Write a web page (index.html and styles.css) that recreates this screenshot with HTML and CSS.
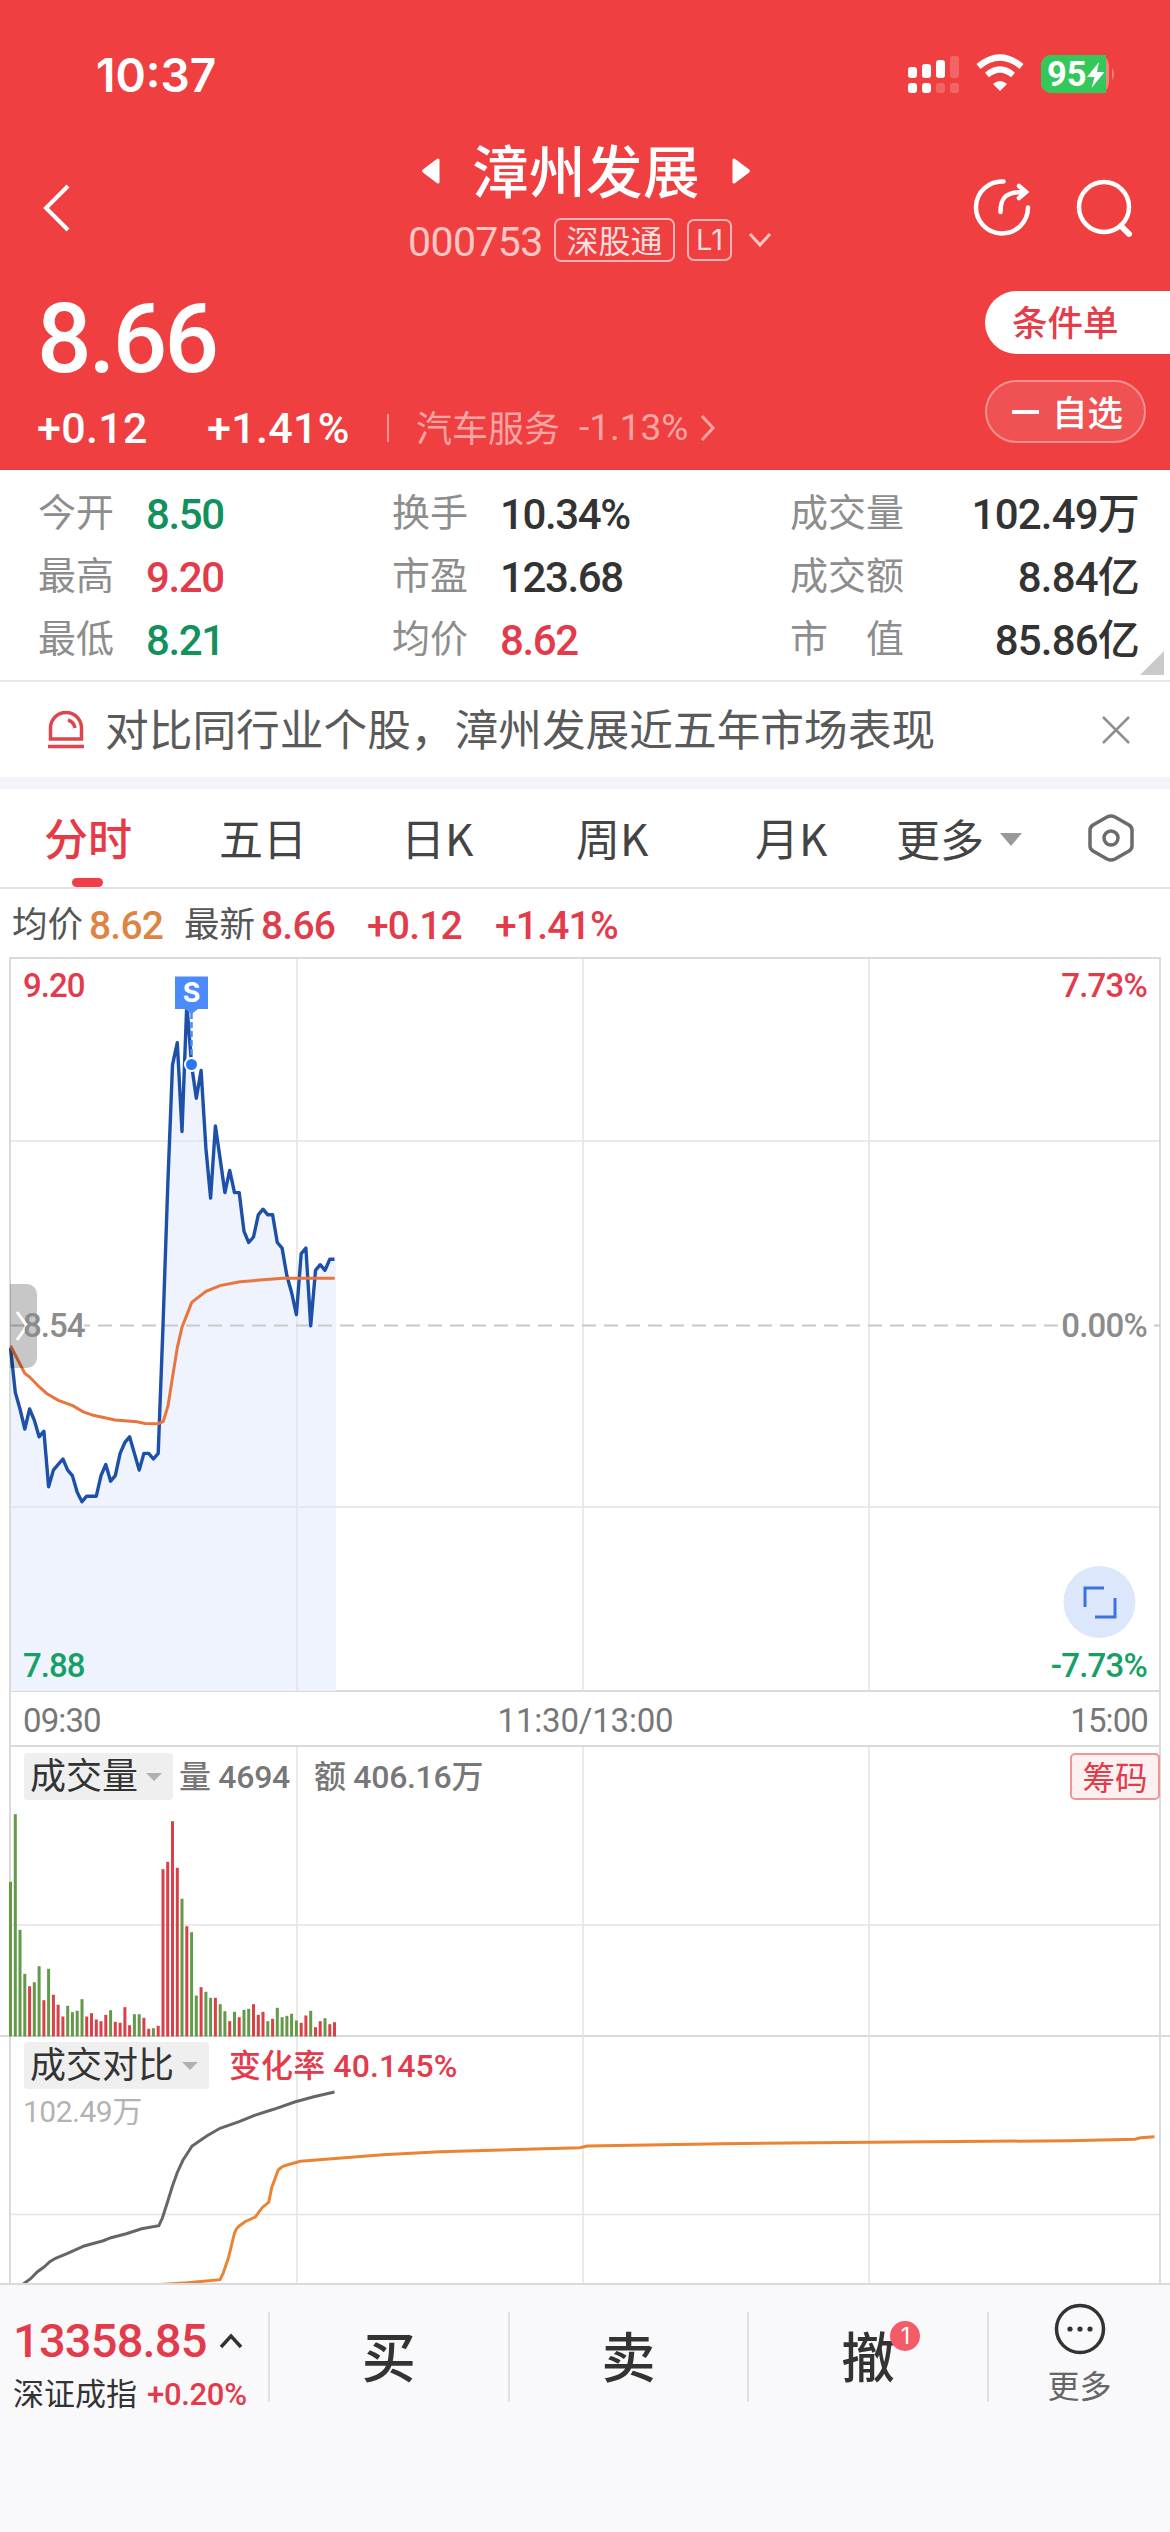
FILE: index.html
```html
<!DOCTYPE html>
<html lang="zh-CN">
<head>
    <meta charset="UTF-8">
    <title>漳州发展 000753</title>
    <link rel="stylesheet" href="styles.css">
</head>
<body>
    <div class="header">
        <div class="status-bar">
            <span class="time">10:37</span>
            <svg class="status-icons" width="210" height="40" viewBox="0 0 210 40">
                <g fill="#fff">
                    <rect x="2" y="13" width="9" height="11" rx="3"/>
                    <rect x="16" y="10" width="9" height="14" rx="3"/>
                    <rect x="30" y="6" width="9" height="18" rx="3"/>
                    <rect x="44" y="2" width="9" height="22" rx="3" opacity=".2"/>
                    <rect x="2" y="29" width="9" height="10" rx="3"/>
                    <rect x="16" y="29" width="9" height="10" rx="3"/>
                    <rect x="30" y="29" width="9" height="10" rx="3" opacity=".2"/>
                    <rect x="44" y="29" width="9" height="10" rx="3" opacity=".2"/>
                    <path d="M94 37l-7-7q7-6 14 0z"/>
                </g>
                <path d="M72.500 12.500q21.500-18 43 0M81 21q13-11 26 0" fill="none" stroke="#fff" stroke-width="6.200"/>
                <rect x="135" y="1" width="68" height="38" rx="10" fill="#f48281"/>
                <path d="M145 1h55v38h-55a10 10 0 0 1-10-10v-18a10 10 0 0 1 10-10z" fill="#34c759"/>
                <path d="M206 14q4 6 0 12z" fill="#f48281"/>
                <path d="M193 8l-12 15h7.500l-3 11 13-16h-7.500z" fill="#fff"/>
                <text class="battery" x="141" y="32">95</text>
            </svg>
        </div>

        <div class="title-bar">
            <svg class="back" width="34" height="52" viewBox="0 0 34 52"><path d="M28 4L6 26l22 22"/></svg>
            <div class="title-box">
                <div class="name-row">
                    <svg width="20" height="28" viewBox="0 0 20 28"><path d="M2.500 14L17 3v22z"/></svg>
                    <h1>漳州发展</h1>
                    <svg width="20" height="28" viewBox="0 0 20 28"><path d="M17.500 14L3 3v22z"/></svg>
                </div>
                <div class="code-row">
                    <span class="code">000753</span>
                    <span class="tag">深股通</span>
                    <span class="tag tag-l1">L1</span>
                    <svg width="26" height="18" viewBox="0 0 26 18"><path d="M3 3l10 11L23 3"/></svg>
                </div>
            </div>
            <svg class="tools" width="170" height="64" viewBox="0 0 170 64">
                <path d="M38.500 5.500a26 26 0 1 0 24.500 26M35.500 36c0-14 5-20 22-20M54 10l7 6-7 6"/>
                <circle cx="139" cy="31" r="25"/>
                <path d="M156 50l8 8" stroke-width="6"/>
            </svg>
        </div>

        <div class="price-box">
            <div class="price">8.66</div>
            <div class="change-row">
                <span class="change">+0.12</span>
                <span class="percent">+1.41%</span>
                <i class="divider"></i>
                <span class="industry">汽车服务</span>
                <span class="industry-rate">-1.13%</span>
                <svg width="18" height="30" viewBox="0 0 18 30"><path d="M3 3l11 12L3 27"/></svg>
            </div>
            <div class="actions">
                <div class="btn-order">条件单</div>
                <div class="btn-fav"><i></i>自选</div>
            </div>
        </div>
    </div>

    <div class="stats">
        <span>今开</span><b class="green">8.50</b><span>换手</span><b>10.34%</b><span>成交量</span><b class="right">102.49万</b>
        <span>最高</span><b class="red">9.20</b><span>市盈</span><b>123.68</b><span>成交额</span><b class="right">8.84亿</b>
        <span>最低</span><b class="green">8.21</b><span>均价</span><b class="red">8.62</b><span>市　值</span><b class="right">85.86亿</b>
        <i class="corner"></i>
    </div>

    <div class="notice">
        <svg width="40" height="40" viewBox="0 0 40 40"><path d="M4.500 29V18a15.500 15.500 0 0 1 31 0v11zM2 36.500h36M22 10q6 2 7 8"/></svg>
        <p>对比同行业个股，漳州发展近五年市场表现</p>
        <svg class="close" width="30" height="30" viewBox="0 0 30 30"><path d="M2 2l26 26M28 2L2 28"/></svg>
    </div>

    <div class="tabs">
        <span class="tab active">分时</span>
        <span class="tab">五日</span>
        <span class="tab">日K</span>
        <span class="tab">周K</span>
        <span class="tab">月K</span>
        <span class="tab more">更多<i class="arrow"></i></span>
        <svg class="setting" width="48" height="50" viewBox="0 0 48 50">
            <path d="M24 3q2 0 4 1l14 8q3 2 3 5v16q0 3-3 5l-14 8q-4 2-8 0l-14-8q-3-2-3-5V17q0-3 3-5l14-8q2-1 4-1z"/>
            <circle cx="24" cy="25" r="7"/>
        </svg>
    </div>

    <div class="legend">
        <span>均价</span><b class="orange">8.62</b>
        <span>最新</span><b class="red">8.66</b>
        <b class="red lg-change">+0.12</b><b class="red">+1.41%</b>
    </div>

    <div class="chart">
        <svg class="minute" width="1170" height="735" viewBox="0 957 1170 735">
            <path id="priceArea" class="area"/>
            <path class="grid" d="M10 1141H1160M10 1507H1160M297 958V1691M583 958V1691M869 958V1691"/>
            <path class="frame" d="M1160 1691V958H10V1691"/>
            <path class="zero" d="M10 1325.500H1160"/>
            <rect class="label-bg" x="1062" y="1310" width="86" height="30"/>
            <rect class="label-bg" x="38" y="1310" width="46" height="30"/>
            <path id="priceLine" class="price-line"/>
            <path class="avg-line" d="M10.500 1345.700L24.700 1373.200 29.700 1377 39.300 1387 46.700 1393.500 58.300 1400.400 72.700 1405.700 83.300 1411.900 93.300 1415.300 115 1419.900 136.700 1421.800 145 1423.400 158.300 1423.700 163.300 1421.400 168 1406 172.700 1376.300 177.300 1347.600 182 1327.300 191.700 1302.400 206 1291.300 220 1285.600 240 1281.800 263 1279.800 283 1278.300 334.700 1278.300"/>
            <path class="handle" d="M10 1284h17a10 10 0 0 1 10 10v64a10 10 0 0 1-10 10H10z"/>
            <path class="handle-arrow" d="M17 1312l10 14-10 14"/>
            <text class="t-red" x="23" y="997">9.20</text>
            <text class="t-gray" x="23" y="1337">8.54</text>
            <text class="t-green" x="23" y="1677">7.88</text>
            <text class="t-red end" x="1147" y="997">7.73%</text>
            <text class="t-gray end" x="1147" y="1337">0.00%</text>
            <text class="t-green end" x="1147" y="1677">-7.73%</text>
            <g class="marker">
                <path class="marker-line" d="M191.500 1013V1060"/>
                <path class="marker-flag" d="M175 976.500h33v32.500h-10l-6.500 5-6.500-5h-10z"/>
                <circle cx="191.500" cy="1064.500" r="6.500"/>
                <text x="191.500" y="1002">S</text>
            </g>
            <circle cx="1099.500" cy="1602" r="36" fill="#dde7fb"/>
            <path class="expand" d="M1085 1607v-19h19M1115 1598v19h-20"/>
        </svg>
        <div class="time-row"><span>09:30</span><span class="mid">11:30/13:00</span><span>15:00</span></div>

        <div class="panel volume">
            <svg width="1170" height="290" viewBox="0 1746 1170 290">
                <path class="grid" d="M10 1924H1160M297 1746V2036M583 1746V2036M869 1746V2036"/>
                <path class="frame" d="M10 1746V2036M1160 1746V2036"/>
                <g id="bars"></g>
            </svg>
            <div class="panel-head">
                <span class="chip">成交量<i class="arrow"></i></span>
                <b class="vol">量 4694</b>
                <b>额 406.16万</b>
                <span class="chips-btn">筹码</span>
            </div>
        </div>

        <div class="panel compare">
            <svg width="1170" height="247" viewBox="0 2036 1170 247">
                <path class="grid" d="M10 2213.500H1160M297 2036V2284M583 2036V2284M869 2036V2284"/>
                <path class="frame" d="M10 2036V2284M1160 2036V2284"/>
                <path class="cmp today" d="M22 2284L30.600 2277.700 37.500 2270.700 44 2266 49.800 2260.700 55.500 2257.300 67 2252.700 84.200 2245 103.300 2239.700 111 2236.700 126.300 2232.700 141.600 2227.700 158.800 2224.700 162.300 2217.300 167.600 2200.700 172.200 2185.700 177.200 2171.700 182.900 2159.300 192.100 2145 206.700 2135 220 2127.300 239.200 2120.700 254.500 2114.300 273.600 2108.300 294.700 2101 313.800 2095.700 334.500 2091"/>
                <path class="cmp before" d="M160 2283.500L187.500 2281.700 220 2278.700 223 2272.700 228.500 2256.700 234.600 2231.700Q236.500 2227 239.200 2225L245 2220.700 255.300 2216 262.100 2206.700 268.700 2201.300 271.700 2186.700 278.200 2169Q282 2165 287 2164L300.400 2160.300 382.700 2153.700 440 2150.700 501 2149 579.800 2146.700 587.400 2145 723 2142.700 869.700 2141.300 1069 2139.700 1135 2138.300 1140.600 2136.700 1154.500 2135.700"/>
            </svg>
            <div class="panel-head">
                <span class="chip">成交对比<i class="arrow"></i></span>
                <b class="ratio">变化率 40.145%</b>
            </div>
            <div class="total">102.49万</div>
        </div>
    </div>

    <div class="footer">
        <div class="index-box">
            <div class="index-value">13358.85<svg width="24" height="16" viewBox="0 0 24 16"><path d="M2 14L12 3l10 11"/></svg></div>
            <div class="index-name">深证成指<b class="red">+0.20%</b></div>
        </div>
        <div class="trade">买</div>
        <div class="trade">卖</div>
        <div class="trade">撤<i class="badge">1</i></div>
        <div class="more-box">
            <svg width="54" height="54" viewBox="0 0 54 54">
                <circle cx="27" cy="27" r="23.500"/>
                <g class="dots"><circle cx="17" cy="27" r="2.600"/><circle cx="27" cy="27" r="2.600"/><circle cx="37" cy="27" r="2.600"/></g>
            </svg>
            <span>更多</span>
        </div>
    </div>

    <script>
        const STEP = 4.765;
        const prices = [
            8.50, 8.42, 8.39, 8.354, 8.39, 8.37, 8.34, 8.35, 8.25, 8.28, 8.29, 8.30, 8.28, 8.27, 8.24,
            8.223, 8.233, 8.233, 8.233, 8.27, 8.29, 8.26, 8.27, 8.31, 8.33, 8.34, 8.31, 8.28, 8.31, 8.31,
            8.30, 8.31, 8.54, 8.79, 9.01, 9.05, 8.89, 9.12, 9.01, 8.95, 9.00, 8.86, 8.77, 8.90, 8.84,
            8.78, 8.82, 8.78, 8.78, 8.71, 8.69, 8.70, 8.74, 8.75, 8.74, 8.74, 8.69, 8.68, 8.63, 8.60,
            8.56, 8.67, 8.68, 8.54, 8.64, 8.65, 8.64, 8.66, 8.66
        ];
        const volumes = [
            464, 667, 320, 188, 151, 163, 211, 109, 203, 125, 95, 60, 92, 73, 77, 112, 60, 70, 51, 46,
            65, 79, 44, 41, 88, 34, 67, 67, 56, 23, 25, 32, 502, 524, 646, 506, 413, 331, 313, 123,
            148, 134, 116, 116, 97, 76, 46, 74, 58, 80, 83, 97, 65, 74, 46, 53, 86, 58, 62, 68,
            48, 41, 63, 77, 28, 46, 55, 37, 43
        ];
        // r - up, g - down
        const colors = 'ggggrggrgrrrggggrrrrrgrrrrggrrgrrrrr'
            + 'grggrggrggrgrggrrrgrgggggrrgrrgrr';

        const points = prices.map((p, i) =>
            (10.5 + i * STEP).toFixed(1) + ' ' + (1325.8 - (p - 8.54) * 555).toFixed(1));
        document.getElementById('priceLine').setAttribute('d', 'M' + points.join('L'));
        document.getElementById('priceArea').setAttribute('d', 'M' + points.join('L') + 'H336V1691H10Z');

        document.getElementById('bars').innerHTML = volumes.map((v, i) =>
            `<rect class="bar-${colors[i]}" x="${(9 + i * STEP).toFixed(1)}" y="${(2035.5 - v / 3).toFixed(1)}" width="3" height="${(v / 3).toFixed(1)}"/>`
        ).join('');
    </script>
</body>
</html>
```
FILE: styles.css
```css
* {
    box-sizing: border-box;
}
body {
    margin: 0;
    width: 1170px;
    height: 2532px;
    overflow: hidden;
    background: #fff;
    color: #333;
    font-family: "Noto Sans CJK SC", sans-serif;
}
svg {
    display: block;
    flex: none;
}
h1, p {
    margin: 0;
}
b {
    font-family: Roboto, "Noto Sans CJK SC", sans-serif;
    font-weight: 500;
}
i {
    font-style: normal;
}
.red { color: #e23b4b; }
.green { color: #12915c; }
.orange { color: #de8443; }

/* header */
.header {
    height: 470px;
    background: #ef3f41;
    color: #fff;
}
.status-bar {
    display: flex;
    justify-content: space-between;
    height: 130px;
    padding: 54px 54px 0 96px;
}
.time {
    font: 600 46px/42px Inter, sans-serif;
}
.battery {
    fill: #fff;
    font: 700 34.5px Roboto, sans-serif;
}
.title-bar {
    display: flex;
    height: 142px;
    padding: 0 35px 0 40px;
}
.back {
    margin-top: 52px;
    fill: none;
    stroke: #fff;
    stroke-width: 4;
}
.title-box {
    width: 370px;
    margin-left: 334px;
}
.name-row {
    display: flex;
    align-items: center;
    justify-content: center;
    width: 356px;
    height: 82px;
    gap: 31px;
}
.name-row svg {
    fill: #fff;
    stroke: #fff;
    stroke-width: 3;
    stroke-linejoin: round;
}
h1 {
    font-size: 56.5px;
    font-weight: 500;
    line-height: 76px;
    letter-spacing: 0.5px;
    margin-top: -6px;
}
.code-row {
    display: flex;
    align-items: center;
    height: 44px;
    margin-top: 6px;
    width: 380px;
}
.code {
    width: 146px;
    font: 400 41px/44px Roboto, sans-serif;
    letter-spacing: -0.6px;
    color: #ffc6c3;
    padding-top: 4px;
}
.tag {
    height: 44px;
    width: 121px;
    border: 2px solid #fbb4b3;
    border-radius: 7px;
    font-size: 32px;
    line-height: 39px;
    text-align: center;
    color: #ffdedc;
    margin-right: 12px;
}
.tag-l1 {
    width: 45px;
    height: 42px;
    font: 400 29px/38px Inter, sans-serif;
    margin-right: 15px;
}
.code-row svg {
    fill: none;
    stroke: #ffc6c3;
    stroke-width: 3;
}
.tools {
    margin-top: 46px;
    margin-left: auto;
    fill: none;
    stroke: #fff;
    stroke-width: 4.5;
    stroke-linecap: round;
}
.price-box {
    position: relative;
    padding-left: 37px;
}
.price {
    height: 132px;
    font: 500 96px/135px Roboto, sans-serif;
    letter-spacing: -2.8px;
}
.change-row {
    display: flex;
    align-items: center;
    height: 48px;
    font: 500 43px/48px Roboto, sans-serif;
    letter-spacing: 0.3px;
}
.change {
    width: 170px;
}
.percent {
    width: 180px;
}
.divider {
    width: 2px;
    height: 28px;
    margin-right: 27px;
    background: #f79492;
}
.industry {
    width: 163px;
    font: 400 36px/48px "Noto Sans CJK SC", sans-serif;
    letter-spacing: 0;
    color: #f9a5a3;
    margin-top: -5px;
}
.industry-rate {
    width: 120px;
    font-size: 37px;
    font-weight: 400;
    letter-spacing: 0;
    color: #f9a5a3;
}
.change-row svg {
    fill: none;
    stroke: #f9a5a3;
    stroke-width: 3;
}
.actions {
    position: absolute;
    right: 0;
    top: 19px;
    width: 185px;
    font-size: 35.5px;
    font-weight: 500;
}
.btn-order {
    height: 63px;
    line-height: 60px;
    padding-left: 27px;
    border-radius: 32px 0 0 32px;
    background: #fff;
    color: #e23d48;
}
.btn-fav {
    display: flex;
    align-items: center;
    width: 161px;
    height: 63px;
    margin-top: 26px;
    padding: 0 0 3px 25px;
    border: 2px solid #f6908f;
    border-radius: 32px;
    background: #f05253;
    line-height: 55px;
}
.btn-fav i {
    width: 27px;
    height: 4px;
    margin: 3px 13px 0 0;
    background: #fff;
}

/* stats */
.stats {
    position: relative;
    display: grid;
    grid-template-columns: 108px 246px 108px 290px 114px 1fr;
    grid-auto-rows: 63px;
    height: 212px;
    padding: 10px 31px 0 38px;
    border-bottom: 2px solid #e9e9e9;
}
.stats span {
    font-size: 38px;
    line-height: 59px;
    color: #8d8d8d;
}
.stats b {
    font-size: 42px;
    line-height: 70px;
    letter-spacing: -1.4px;
}
.stats .right {
    text-align: right;
    letter-spacing: -0.8px;
}
.corner {
    position: absolute;
    right: 6px;
    bottom: 5px;
    border-left: 24px solid transparent;
    border-bottom: 24px solid #cacaca;
}

/* notice */
.notice {
    display: flex;
    align-items: center;
    height: 107px;
    padding: 0 39px 0 46px;
    border-bottom: 12px solid #f3f4fa;
}
.notice svg {
    fill: none;
    stroke: #e0454f;
    stroke-width: 3.5;
}
.notice p {
    flex: 1;
    margin: -5px 0 0 19px;
    font-size: 43.7px;
    line-height: 60px;
    color: #5a5a5a;
}
.notice .close {
    stroke: #8f8f8f;
    stroke-width: 2.5;
}

/* tabs */
.tabs {
    display: flex;
    height: 100px;
    padding-left: 44px;
    border-bottom: 2px solid #e3e3e3;
    font-size: 44px;
    line-height: 96px;
    color: #444;
}
.tab {
    position: relative;
    width: 179px;
}
.tab:nth-child(1) { width: 175px; }
.tab:nth-child(2) { width: 182px; }
.tab:nth-child(3) { width: 175px; }
.tab:nth-child(5) { width: 141px; }
.tab.active {
    color: #e83a45;
    font-weight: 500;
}
.tab.active::after {
    content: "";
    position: absolute;
    left: 28px;
    bottom: 0;
    width: 31px;
    height: 9px;
    border-radius: 5px;
    background: #ef3f48;
}
.tab.more {
    display: flex;
    align-items: center;
    width: 191px;
}
.arrow {
    border: 8px solid transparent;
    border-top: 8px solid #b0b0b0;
    border-bottom: 0;
}
.tab .arrow {
    margin: 2px 0 0 16px;
    border-width: 13px 11px 0;
    border-top-color: #999;
}
.setting {
    margin-top: 24px;
    fill: none;
    stroke: #6b6b6b;
    stroke-width: 3.5;
}

/* legend */
.legend {
    display: flex;
    height: 68px;
    padding-left: 12px;
    font-size: 35.5px;
    line-height: 68px;
    color: #555;
}
.legend span {
    margin-top: -1px;
    width: 77px;
}
.legend b {
    font-size: 39px;
    line-height: 75px;
    letter-spacing: -0.8px;
    width: 95px;
}
.legend .lg-change {
    margin-left: 11px;
    width: 128px;
}

/* charts */
.grid {
    fill: none;
    stroke: #e3e4e6;
    stroke-width: 1.5;
}
.frame {
    fill: none;
    stroke: #dadada;
    stroke-width: 2;
}
.zero {
    stroke: #c9c9c9;
    stroke-width: 2;
    stroke-dasharray: 14 8;
}
.area {
    fill: #eef3fd;
}
.price-line {
    fill: none;
    stroke: #1d50a8;
    stroke-width: 3.4;
    stroke-linejoin: round;
}
.avg-line {
    fill: none;
    stroke: #e8743f;
    stroke-width: 3;
}
.minute text {
    font: 500 33px Roboto, sans-serif;
    letter-spacing: -1px;
}
.minute .end {
    text-anchor: end;
    letter-spacing: -0.8px;
}
.t-red { fill: #e23b4b; }
.t-green { fill: #16a066; }
.t-gray { fill: #8c8c8c; }
.label-bg {
    fill: #fff;
}
.handle {
    fill: rgba(0, 0, 0, 0.22);
}
.handle-arrow {
    fill: none;
    stroke: #fff;
    stroke-width: 3;
}
.marker-flag {
    fill: #4b8bfb;
}
.marker-line {
    stroke: #4b8bfb;
    stroke-width: 2.5;
    stroke-dasharray: 6 3;
}
.marker circle {
    fill: #2678f3;
    stroke: #fff;
    stroke-width: 2;
}
.minute .marker text {
    fill: #fff;
    font: 700 27px Inter, sans-serif;
    letter-spacing: 0;
    text-anchor: middle;
}
.expand {
    fill: none;
    stroke: #3c72dc;
    stroke-width: 3;
}
.time-row {
    display: flex;
    justify-content: space-between;
    height: 57px;
    margin: -2px 9px 0;
    padding: 0 11px 0 12px;
    border: 2px solid #dadada;
    font: 400 33px/57px Roboto, sans-serif;
    letter-spacing: -0.9px;
    color: #777;
}
.time-row .mid {
    letter-spacing: -0.2px;
}
.panel {
    position: relative;
    border-bottom: 2px solid #dadada;
}
.panel-head {
    position: absolute;
    left: 24px;
    top: 6px;
    right: 10px;
    display: flex;
    height: 47px;
    line-height: 48px;
}
.chip {
    display: flex;
    align-items: center;
    width: 149px;
    padding: 0 0 7px 6px;
    border-radius: 4px;
    background: #efefef;
    font-size: 36px;
    line-height: 40px;
}
.chip .arrow {
    margin: 7px 0 0 8px;
}
.panel-head b {
    font-size: 32px;
    letter-spacing: -0.3px;
    color: #777;
}
.panel-head .vol {
    width: 135px;
    margin-left: 6px;
}
.chips-btn {
    width: 90px;
    margin-left: auto;
    border: 2px solid #ef9697;
    border-radius: 5px;
    background: #fdf0f0;
    color: #e23b4b;
    font-size: 32.5px;
    line-height: 41px;
    text-align: center;
}
.bar-r { fill: #da4048; }
.bar-g { fill: #629a49; }
.volume {
    height: 290px;
}
.compare {
    height: 248px;
    overflow: hidden;
}
.compare .panel-head {
    top: 5px;
}
.compare .chip {
    width: 185px;
}
.panel-head .ratio {
    margin-left: 20px;
    letter-spacing: 0.1px;
    color: #e23b4b;
}
.cmp {
    fill: none;
    stroke-width: 3;
}
.today { stroke: #666; }
.before { stroke: #ea8432; }
.total {
    position: absolute;
    left: 23px;
    top: 55px;
    font: 400 30px/40px Roboto, "Noto Sans CJK SC", sans-serif;
    letter-spacing: -0.5px;
    color: #b3b3b3;
}

/* footer */
.footer {
    display: flex;
    height: 248px;
    padding-top: 27px;
    background: #f9f9fb;
}
.index-box {
    width: 270px;
    height: 90px;
    padding-left: 13px;
    border-right: 2px solid #e0e0e0;
}
.index-value {
    display: flex;
    align-items: center;
    height: 57px;
    font: 500 47px/57px Roboto, sans-serif;
    color: #e23b4b;
    letter-spacing: -0.8px;
}
.index-value svg {
    margin-left: 12px;
    fill: none;
    stroke: #333;
    stroke-width: 3.5;
}
.index-name {
    font-size: 31px;
    line-height: 45px;
    white-space: nowrap;
}
.index-name b {
    margin-left: 10px;
    letter-spacing: -0.3px;
}
.trade {
    position: relative;
    width: 240px;
    height: 90px;
    border-right: 2px solid #e0e0e0;
    font-size: 54px;
    font-weight: 500;
    line-height: 86px;
    text-align: center;
}
.badge {
    position: absolute;
    left: 141px;
    top: 9px;
    width: 30px;
    height: 30px;
    border-radius: 50%;
    background: #f45b69;
    color: #fff;
    font: 400 23px/30px Inter, sans-serif;
}
.more-box {
    display: flex;
    flex-direction: column;
    align-items: center;
    width: 181px;
    margin-top: -10px;
    font-size: 32px;
    line-height: 48px;
    color: #666;
}
.more-box svg {
    margin-bottom: 4px;
    fill: none;
    stroke: #333;
    stroke-width: 3.5;
}
.more-box .dots {
    fill: #333;
    stroke: none;
}
```
